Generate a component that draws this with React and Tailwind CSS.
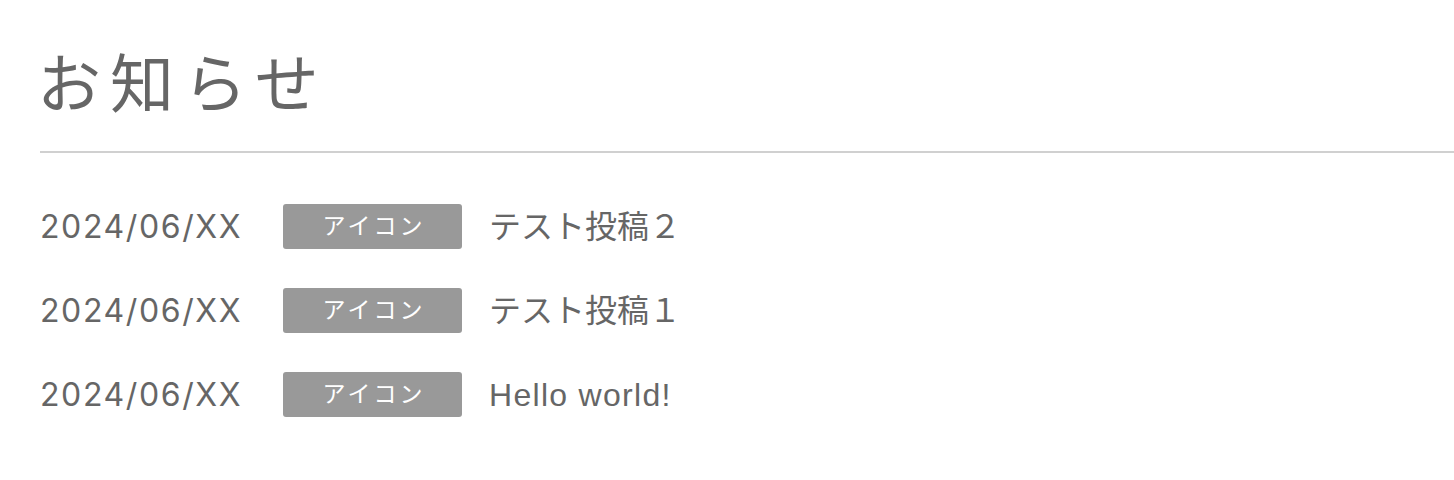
export default function App() {
  const rows = [
    { date: "2024/06/XX", title: "テスト投稿２", cls: "ml-[27px] text-[32px] leading-none" },
    { date: "2024/06/XX", title: "テスト投稿１", cls: "ml-[27px] text-[32px] leading-none" },
    { date: "2024/06/XX", title: "Hello world!", cls: "ml-[27px] text-[32px] leading-none tracking-[1.3px]" },
  ];
  return (
    <div
      className="w-[1454px] h-[480px] bg-white pl-10 text-[#666666]"
      style={{ fontFamily: '"Liberation Sans", "Noto Sans CJK JP", sans-serif' }}
    >
      <div className="pt-[53px] pb-[34px] border-b-2 border-[#d0d0d0]">
        <h1 className="-ml-[3px] text-[64px] leading-none tracking-[9px] font-normal">お知らせ</h1>
      </div>
      <div className="pt-[51px] flex flex-col gap-[39px]">
        {rows.map((r, i) => (
          <div key={i} className="flex items-center h-[45px]">
            <span
              className="text-[32px] leading-none w-[243px] tracking-[1.6px]"
              style={{ fontFamily: 'Inter, "Liberation Sans", sans-serif' }}
            >
              {r.date}
            </span>
            <span className="w-[179px] h-[45px] rounded-[3px] bg-[#999999] text-white text-[23px] leading-none flex items-center justify-center tracking-[3px] pl-[3px]">
              アイコン
            </span>
            <span className={r.cls}>{r.title}</span>
          </div>
        ))}
      </div>
    </div>
  );
}
